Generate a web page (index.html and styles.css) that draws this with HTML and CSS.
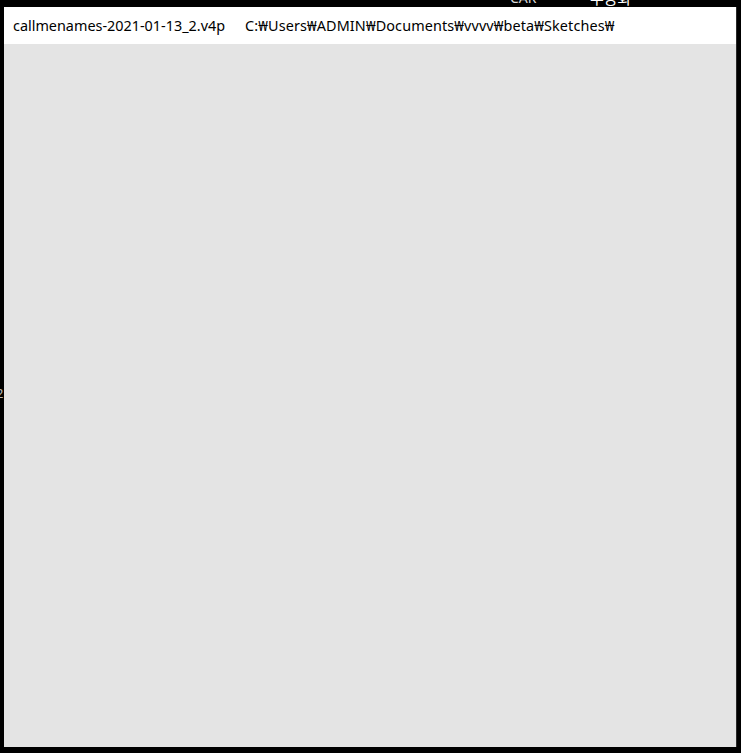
FILE: index.html
```html
<!DOCTYPE html>
<html>
<head>
<meta charset="utf-8">
<link rel="stylesheet" href="styles.css">
</head>
<body>
<div class="stage">
  <span class="ghost ghost-car">CAR</span>
  <span class="ghost ghost-ko">무궁화</span>
  <span class="ghost ghost-two">2</span>
  <div class="window">
    <div class="titlebar">
      <span class="file">callmenames-2021-01-13_2.v4p</span>
      <span class="path">C:₩Users₩ADMIN₩Documents₩vvvv₩beta₩Sketches₩</span>
    </div>
    <div class="canvas"></div>
  </div>
</div>
</body>
</html>
```

FILE: styles.css
```css
html, body {
  margin: 0;
  padding: 0;
  background: #000;
}
.stage {
  position: relative;
  width: 741px;
  height: 753px;
  overflow: hidden;
  padding: 7px 5px 6px 4px;
  box-sizing: border-box;
}
.window {
  display: flex;
  flex-direction: column;
  width: 732px;
  height: 740px;
  border-right: 1px solid #2a2a2a;
}
.titlebar {
  flex: 0 0 37px;
  background: #fff;
  display: flex;
  align-items: center;
  padding-left: 9px;
  font-family: "Noto Sans", "Noto Sans CJK KR", sans-serif;
  font-size: 14.4px;
  color: #000;
  white-space: nowrap;
}
.path {
  margin-left: 20px;
  letter-spacing: 0.12px;
}
.canvas {
  flex: 1;
  background: #e4e4e4;
}
.ghost {
  position: absolute;
  font-family: "Noto Sans", "Noto Sans CJK KR", sans-serif;
  font-size: 14px;
  color: #d8d8d8;
  line-height: 1;
}
.ghost-car { left: 510px; top: -9px; }
.ghost-ko { left: 590px; top: -9px; color: #ffffff; font-size: 15px; }
.ghost-two { left: -4px; top: 387px; color: #bbb; font-size: 13px; }
```
